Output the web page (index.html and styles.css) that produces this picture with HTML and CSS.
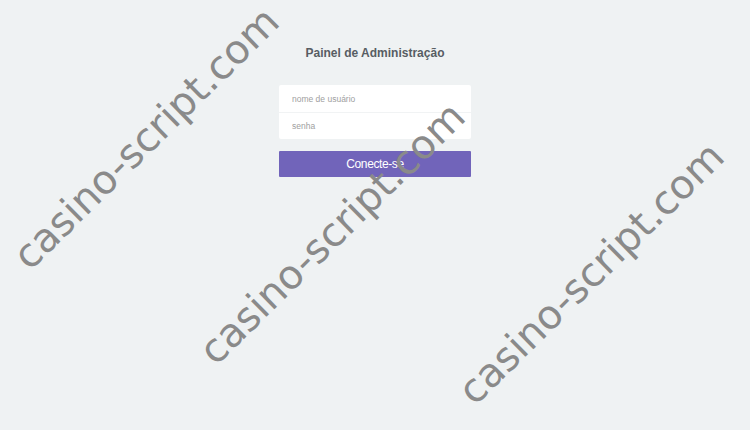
FILE: index.html
```html
<!DOCTYPE html>
<html lang="pt">
<head>
    <meta charset="UTF-8">
    <meta name="viewport" content="width=device-width, initial-scale=1.0">
    <title>Painel de Administração</title>
    <link rel="stylesheet" href="styles.css">
</head>
<body>
    <div class="login">
        <h1>Painel de Administração</h1>

        <form class="login-form">
            <div class="fields">
                <input type="text" placeholder="nome de usuário">
                <input type="password" placeholder="senha">
            </div>
            <button type="submit">Conecte-se</button>
        </form>
    </div>

    <!-- watermarks -->
    <span class="mark mark-1">casino-script.com</span>
    <span class="mark mark-2">casino-script.com</span>
    <span class="mark mark-3">casino-script.com</span>
</body>
</html>
```

FILE: styles.css
```css
* {
    margin: 0;
    padding: 0;
    box-sizing: border-box;
}

body {
    background: #eff2f3;
    font-family: "Liberation Sans", Arial, sans-serif;
    min-height: 100vh;
    overflow: hidden;
    position: relative;
}

.login {
    width: 192px;
    margin: 0 auto;
    padding-top: 46px;
}

h1 {
    font-size: 12px;
    font-weight: bold;
    color: #575d63;
    text-align: center;
    white-space: nowrap;
    margin: 0 -40px 25px;
}

.fields {
    background: #fff;
    border-radius: 2px;
    display: flex;
    flex-direction: column;
}

.fields input {
    height: 27px;
    border: none;
    background: transparent;
    padding: 0 13px;
    font-family: inherit;
    font-size: 8.5px;
    color: #444;
    outline: none;
}

.fields input::placeholder {
    color: #a0a0a0;
}

.fields input + input {
    border-top: 1px solid #f1f3f4;
}

button {
    display: block;
    width: 100%;
    height: 26px;
    margin-top: 12px;
    border: none;
    border-radius: 1px;
    background: #7164ba;
    color: #fff;
    font-family: inherit;
    font-size: 12px;
    letter-spacing: -0.4px;
    cursor: pointer;
}

.mark {
    position: absolute;
    font-family: "DejaVu Sans", Verdana, sans-serif;
    font-size: 40px;
    line-height: 1;
    color: #8a8a8a;
    white-space: nowrap;
    transform-origin: left bottom;
    transform: rotate(-44.5deg);
    pointer-events: none;
}

.mark-1 { left: 34px; top: 236px; }
.mark-2 { left: 220px; top: 331px; }
.mark-3 { left: 479px; top: 371px; }
```
